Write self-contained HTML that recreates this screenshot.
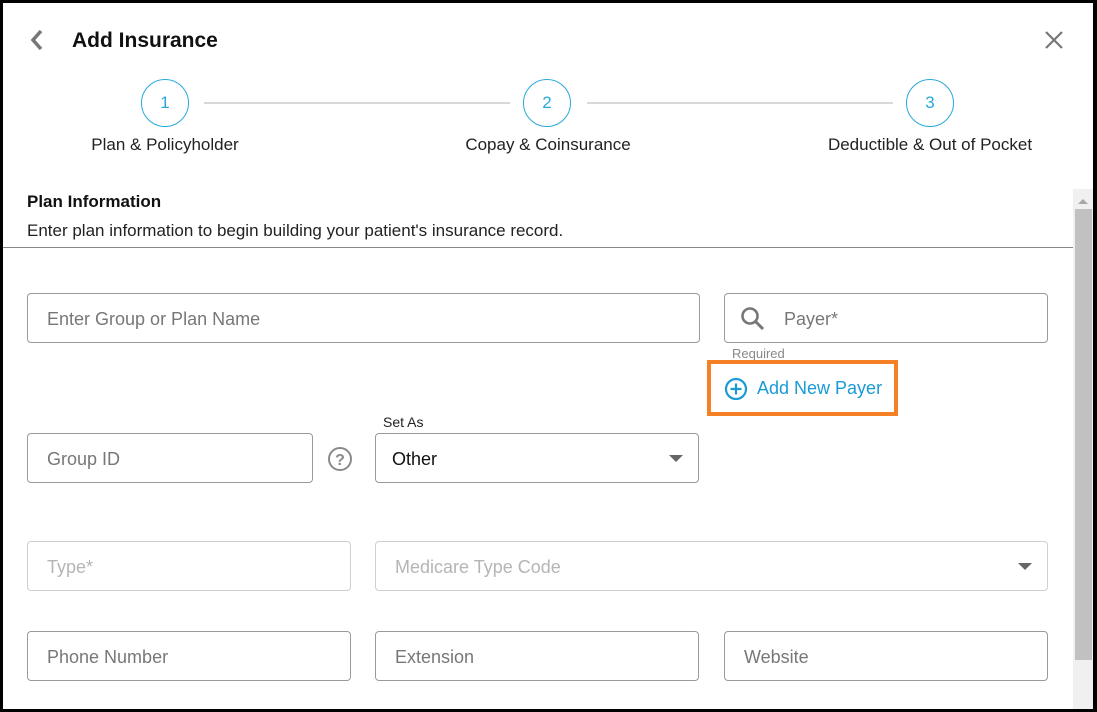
<!DOCTYPE html>
<html><head><style>
*{box-sizing:border-box;margin:0;padding:0}
body{width:1097px;height:712px;overflow:hidden;background:#fff;font-family:"Liberation Sans",sans-serif;position:relative}
.frame{position:absolute;left:0;top:0;width:1097px;height:712px;border:3px solid #000;border-right-width:4px}
.a{position:absolute}
.circ{position:absolute;width:48px;height:48px;border:1.5px solid #29a8dc;border-radius:50%;color:#29a8dc;font-size:17px;text-align:center;line-height:45px}
.line{position:absolute;height:2px;background:#d8d8d8;top:102px}
.inp{position:absolute;border:1px solid #9a9a9a;border-radius:4px;height:50px;font-size:18px;color:#777;padding-left:19px;padding-top:1px;line-height:48px}
.dis{border-color:#cfcfcf;color:#b5b5b5}
.lbl{position:absolute;font-size:17px;color:#222;text-align:center}
</style></head><body>
<svg class="a" style="left:28px;top:28px" width="18" height="24" viewBox="0 0 18 24"><path d="M13 3 L5 12 L13 21" stroke="#777" stroke-width="3.5" fill="none"/></svg>
<div class="a" style="left:72px;top:29px;font-size:21px;font-weight:bold;color:#111">Add Insurance</div>
<svg class="a" style="left:1044px;top:30px" width="20" height="20"><path d="M2 2 L18 18 M18 2 L2 18" stroke="#777" stroke-width="2.2"/></svg>

<div class="circ" style="left:141px;top:79px">1</div>
<div class="circ" style="left:523px;top:79px">2</div>
<div class="circ" style="left:906px;top:79px">3</div>
<div class="line" style="left:204px;width:306px"></div>
<div class="line" style="left:587px;width:306px"></div>
<div class="lbl" style="left:65px;width:200px;top:135px">Plan &amp; Policyholder</div>
<div class="lbl" style="left:438px;width:220px;top:135px">Copay &amp; Coinsurance</div>
<div class="lbl" style="left:800px;width:260px;top:135px">Deductible &amp; Out of Pocket</div>

<div class="a" style="left:27px;top:192px;font-size:17px;font-weight:bold;color:#111">Plan Information</div>
<div class="a" style="left:27px;top:221px;font-size:17px;color:#222">Enter plan information to begin building your patient's insurance record.</div>
<div class="a" style="left:3px;top:247px;width:1070px;height:1px;background:#888"></div>

<div class="a" style="left:1073px;top:189px;width:20px;height:520px;background:#f0f0f0"></div>
<div class="a" style="left:1075px;top:209px;width:17px;height:451px;background:#c1c1c1"></div>
<svg class="a" style="left:1077px;top:197px" width="12" height="8"><path d="M1 7 L6 2 L11 7Z" fill="#a8a8a8"/></svg>

<div class="inp" style="left:27px;top:293px;width:673px">Enter Group or Plan Name</div>
<div class="inp" style="left:724px;top:293px;width:324px;padding-left:59px">Payer*</div>
<svg class="a" style="left:739px;top:305px" width="28" height="28"><circle cx="11" cy="11" r="7.5" stroke="#777" stroke-width="2.6" fill="none"/><path d="M16.5 16.5 L24 24" stroke="#777" stroke-width="3"/></svg>
<div class="a" style="left:732px;top:346px;font-size:13px;color:#888">Required</div>
<div class="a" style="left:707px;top:360px;width:191px;height:56px;border:4px solid #f58025"></div>
<svg class="a" style="left:724px;top:377px" width="24" height="24"><circle cx="12" cy="12" r="10" stroke="#1a9ad6" stroke-width="2.2" fill="none"/><path d="M12 6.5V17.5M6.5 12H17.5" stroke="#1a9ad6" stroke-width="2.2"/></svg>
<div class="a" style="left:757px;top:378px;font-size:18px;color:#1a9ad6">Add New Payer</div>

<div class="inp" style="left:27px;top:433px;width:286px">Group ID</div>
<svg class="a" style="left:327px;top:446px" width="26" height="26"><circle cx="13" cy="13" r="11" stroke="#8a8a8a" stroke-width="2" fill="none"/><text x="13" y="19" text-anchor="middle" font-family="Liberation Sans" font-size="16" font-weight="bold" fill="#8a8a8a">?</text></svg>
<div class="a" style="left:383px;top:414px;font-size:14px;color:#222">Set As</div>
<div class="inp" style="left:375px;top:433px;width:324px;color:#111;padding-left:16px">Other</div>
<svg class="a" style="left:668px;top:454px" width="16" height="9"><path d="M1 1 L15 1 L8 8Z" fill="#666"/></svg>

<div class="inp dis" style="left:27px;top:541px;width:324px">Type*</div>
<div class="inp dis" style="left:375px;top:541px;width:673px">Medicare Type Code</div>
<svg class="a" style="left:1017px;top:562px" width="16" height="9"><path d="M1 1 L15 1 L8 8Z" fill="#666"/></svg>

<div class="inp" style="left:27px;top:631px;width:324px">Phone Number</div>
<div class="inp" style="left:375px;top:631px;width:324px">Extension</div>
<div class="inp" style="left:724px;top:631px;width:324px">Website</div>

<div class="frame"></div>
</body></html>
